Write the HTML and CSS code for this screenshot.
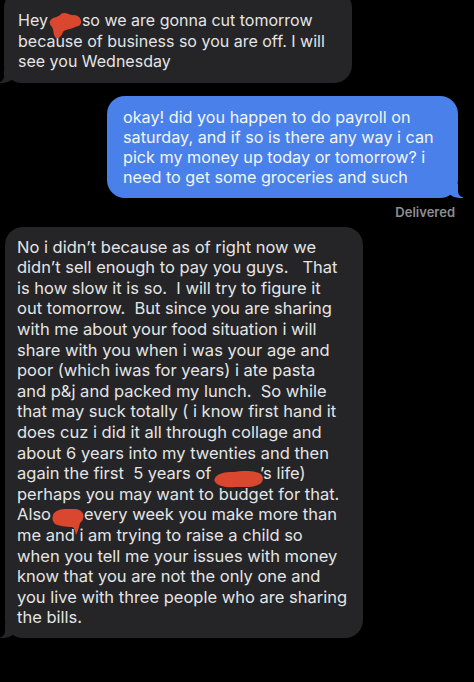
FILE: index.html
```html
<!DOCTYPE html>
<html>
  <head>
    <meta charset="utf-8">
    <title>Messages</title>
    <link rel="stylesheet" href="styles.css">
  </head>
  <body>
    <div class="thread">

      <div class="bubble them first">
        Hey<span class="redact r-hey"><svg viewBox="0 0 34 28"><path d="M2 9 C5 4 10 6 13 2 C17 -1 22 4 26 3 C30 3 34 7 33 11 C32 15 28 14 25 16 C21 18 17 17 15 20 C13 25 10 28 7 25 C5 22 6 18 4 15 C2 13 1 11 2 9 Z"/></svg></span>so we are gonna cut tomorrow<br>
        because of business so you are off. I will<br>
        see you Wednesday
      </div>

      <div class="bubble me">
        okay! did you happen to do payroll on<br>
        saturday, and if so is there any way i can<br>
        pick my money up today or tomorrow? i<br>
        need to get some groceries and such
      </div>

      <div class="status">Delivered</div>

      <div class="bubble them long">
        No i didn’t because as of right now we<br>
        didn’t sell enough to pay you guys.&nbsp;&nbsp; That<br>
        is how slow it is so.&nbsp; I will try to figure it<br>
        out tomorrow.&nbsp; But since you are sharing<br>
        with me about your food situation i will<br>
        share with you when i was your age and<br>
        poor (which iwas for years) i ate pasta<br>
        and p&amp;j and packed my lunch.&nbsp; So while<br>
        that may suck totally ( i know first hand it<br>
        does cuz i did it all through collage and<br>
        about 6 years into my twenties and then<br>
        again the first&nbsp; 5 years of <span class="redact r-kid"><svg viewBox="0 0 52 20"><path d="M2 9 C5 4 12 3 20 3 C28 2 38 1 46 4 C51 6 51 12 47 15 C40 19 30 18 22 18 C14 19 6 17 3 14 C1 12 1 11 2 9 Z"/></svg></span>’s life)<br>
        perhaps you may want to budget for that.<br>
        Also<span class="redact r-also"><svg viewBox="0 0 34 30"><path d="M2 8 C4 3 10 2 16 2 C22 2 28 1 31 5 C34 9 32 14 29 16 C28 20 27 24 25 28 C24 24 24 21 21 20 C15 20 8 19 4 17 C1 14 1 11 2 8 Z"/></svg></span>every week you make more than<br>
        me and i am trying to raise a child so<br>
        when you tell me your issues with money<br>
        know that you are not the only one and<br>
        you live with three people who are sharing<br>
        the bills.
      </div>

    </div>
  </body>
</html>
```

FILE: styles.css
```css
html, body {
  margin: 0;
  background: #000;
}

.thread {
  display: flex;
  flex-direction: column;
  font-family: Inter, "Liberation Sans", sans-serif;
  font-size: 16px;
  line-height: 20.5px;
  color: #e4e4e6;
}

.bubble {
  position: relative;
  border-radius: 18px;
  box-sizing: border-box;
  white-space: nowrap;
}

.bubble.them {
  align-self: flex-start;
  background: #252527;
  margin-left: 4px;
  padding: 10px 8px 10px 14px;
}
.bubble.them::before {
  content: '';
  position: absolute;
  left: -5px;
  bottom: 0;
  width: 16px;
  height: 14px;
  background: #252527;
  border-bottom-right-radius: 12px 10px;
}
.bubble.them::after {
  content: '';
  position: absolute;
  left: -12px;
  bottom: 0;
  width: 12px;
  height: 14px;
  background: #000;
  border-bottom-right-radius: 8px 6px;
}

.bubble.first {
  width: 348px;
  margin-top: -10px;
  padding-top: 20px;
  padding-bottom: 11px;
}

.bubble.long {
  width: 358px;
  margin-left: 5px;
  margin-top: 7px;
  padding-left: 12px;
  font-size: 16.5px;
  line-height: 20.6px;
}

.bubble.me {
  align-self: flex-end;
  width: 351px;
  margin: 13px 16px 0 0;
  padding: 11px 6px 10px 16px;
  background: #4a80e9;
  color: #f2f5fc;
  font-size: 16.2px;
  line-height: 20.3px;
}
.bubble.me::before {
  content: '';
  position: absolute;
  right: -5px;
  bottom: 0;
  width: 16px;
  height: 14px;
  background: #4a80e9;
  border-bottom-left-radius: 12px 10px;
}
.bubble.me::after {
  content: '';
  position: absolute;
  right: -12px;
  bottom: 0;
  width: 12px;
  height: 14px;
  background: #000;
  border-bottom-left-radius: 8px 6px;
}

.status {
  align-self: flex-end;
  margin: 6px 19px 0 0;
  font-size: 13px;
  line-height: 16px;
  font-weight: 600;
  color: #8d8d92;
}

/* scribbled-out names */
.redact {
  position: relative;
  display: inline-block;
  vertical-align: baseline;
  height: 1px;
}
.redact svg {
  position: absolute;
  fill: #d9472e;
}
.redact.r-hey { width: 34px; }
.redact.r-hey svg { left: 0; top: -13px; width: 34px; height: 28px; }
.redact.r-kid { width: 44px; }
.redact.r-kid svg { left: -3px; top: -9px; width: 52px; height: 20px; }
.redact.r-also { width: 33px; }
.redact.r-also svg { left: 0; top: -12px; width: 34px; height: 30px; }
```
